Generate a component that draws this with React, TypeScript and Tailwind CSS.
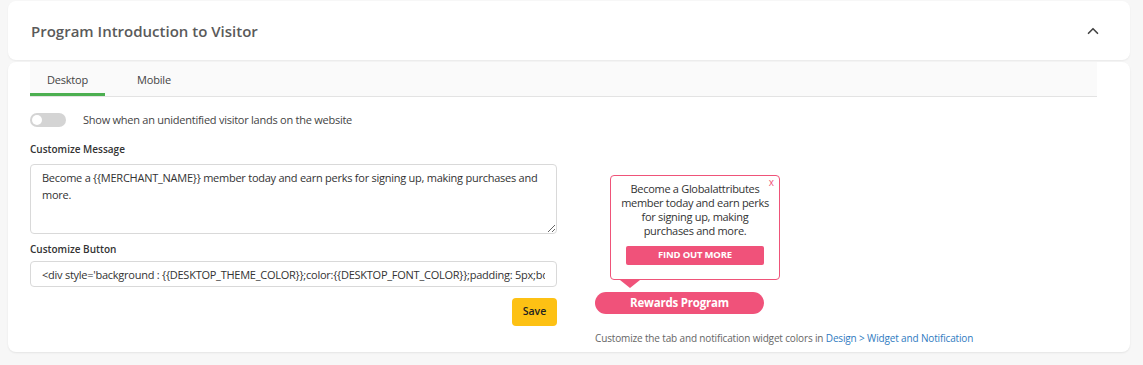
import { ChevronUp } from 'lucide-react';

const FONT = { fontFamily: '"Open Sans", "Noto Sans", sans-serif' };

export default function App() {
  return (
    <div className="min-h-[365px] bg-[#f7f7f7] px-2 pt-px text-[#333]" style={FONT}>
      {/* header */}
      <div className="flex h-[59px] w-[1122px] items-center justify-between rounded-lg bg-white pl-[23px] pr-[28px] shadow-[0_1px_2px_rgba(0,0,0,0.06)]">
        <h2 className="pt-[2px] text-[15px] font-semibold text-[#5a5a5a]">Program Introduction to Visitor</h2>
        <ChevronUp className="h-[18px] w-[18px] text-[#444]" strokeWidth={2.2} />
      </div>

      {/* body */}
      <div className="mt-[2px] h-[290px] w-[1122px] rounded-lg bg-white pl-[22px] pr-[33px] shadow-[0_1px_2px_rgba(0,0,0,0.08)]">
        {/* tabs */}
        <div className="flex h-[35px] items-end border-b border-[#e3e3e3] bg-[#fafafa]">
          <div className="flex h-[35px] w-[75px] items-center justify-center border-b-[3px] border-[#4caf50] pt-[6px] text-[11px] tracking-[-0.2px] text-[#444]">
            Desktop
          </div>
          <div className="flex h-[35px] w-[98px] items-center justify-center pb-[3px] pt-[6px] text-[11px] tracking-[-0.2px] text-[#444]">
            Mobile
          </div>
        </div>

        <div className="flex">
          {/* left column */}
          <div className="w-[527px]">
            <div className="mt-[15px] flex h-[15px] items-center">
              <div className="flex h-[14px] w-[36px] items-center rounded-full bg-[#d4d4d4] px-[2px]">
                <div className="h-[10px] w-[10px] rounded-full bg-white" />
              </div>
              <span className="ml-[17px] text-[11px] leading-[15px] tracking-[-0.25px] text-[#444]">
                Show when an unidentified visitor lands on the website
              </span>
            </div>

            <div className="mt-[15px] text-[10px] font-semibold leading-[14px] text-[#333]">Customize Message</div>
            <textarea
              className="mt-[8px] block h-[70px] w-full resize-y rounded-[4px] border border-[#d9d9d9] px-[11px] py-[4px] text-[11px] leading-[17px] tracking-[-0.25px] text-[#333] outline-none"
              defaultValue="Become a {{MERCHANT_NAME}} member today and earn perks for signing up, making purchases and more."
            />

            <div className="mt-[8px] text-[10px] font-semibold leading-[14px] text-[#333]">Customize Button</div>
            <input
              className="mt-[5px] block h-[26px] w-full rounded-[4px] border border-[#d9d9d9] px-[11px] text-[11px] tracking-[-0.25px] text-[#333] outline-none"
              defaultValue="<div style='background : {{DESKTOP_THEME_COLOR}};color:{{DESKTOP_FONT_COLOR}};padding: 5px;border-radius:3px'>"
            />

            <div className="mt-[11px] flex justify-end">
              <button className="h-[28px] w-[45px] rounded-[4px] bg-[#fdc114] text-[10.5px] font-semibold text-[#222]">
                Save
              </button>
            </div>
          </div>

          {/* right column: widget preview */}
          <div className="ml-[38px] pt-[78px]">
            <div className="relative ml-[15px] w-[170px] rounded-[4px] border border-[#ef5379] bg-white px-[15px] pb-[14px] pt-[6px] text-center">
              <span className="absolute right-[5px] top-[-1px] text-[10px] text-[#ef5379]">x</span>
              <p className="-mx-[7px] text-[11px] leading-[14px] tracking-[-0.3px] text-[#333]">
                Become a Globalattributes member today and earn perks for signing up, making purchases and more.
              </p>
              <div className="mt-[8px] flex h-[19px] items-center justify-center rounded-[2px] bg-[#f0527a] text-[9.5px] font-bold tracking-[-0.2px] text-white">
                FIND OUT MORE
              </div>
            </div>
            <svg width="20" height="8" viewBox="0 0 20 8" className="ml-[25px] block">
              <polygon points="0,0 20,0 10,8" fill="#f0527a" />
            </svg>
            <div className="mt-[4px] flex h-[22px] w-[169px] items-center justify-center rounded-full bg-[#f0527a] text-[11.5px] font-bold tracking-[-0.2px] text-white">
              Rewards Program
            </div>
            <p className="mt-[17px] whitespace-nowrap text-[10px] leading-[14px] tracking-[-0.15px] text-[#666]">
              Customize the tab and notification widget colors in{' '}
              <span className="text-[#2f7bbf]">Design &gt; Widget and Notification</span>
            </p>
          </div>
        </div>
      </div>
    </div>
  );
}
